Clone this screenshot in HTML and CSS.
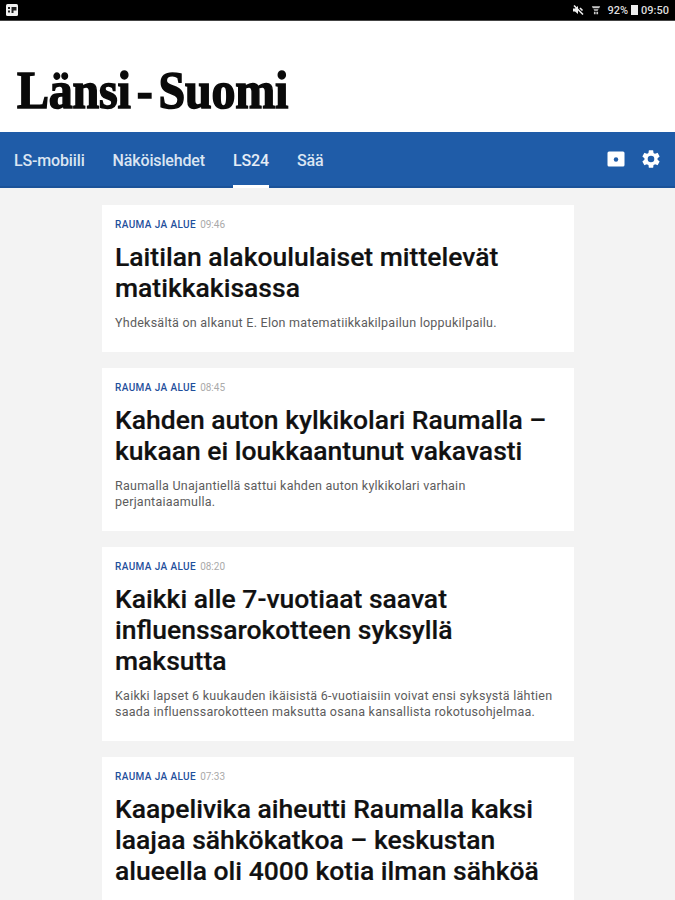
FILE: index.html
```html
<!DOCTYPE html>
<html lang="fi">
<head>
  <meta charset="UTF-8">
  <meta name="viewport" content="width=device-width, initial-scale=1.0">
  <title>Länsi-Suomi</title>
  <link rel="stylesheet" href="styles.css">
</head>
<body>
  <div class="statusbar">
    <svg class="status-pic" viewBox="0 0 12 12" width="12" height="12">
      <rect width="12" height="12" rx="1.5" fill="#f2f2f2"/>
      <rect x="2" y="3" width="2" height="2" fill="#222"/>
      <rect x="2" y="6.5" width="2" height="2" fill="#222"/>
      <path d="M5.5 3h5v3.5H7.5V9H5.5z" fill="#222"/>
    </svg>
    <div class="status-right">
      <svg viewBox="0 0 12 12" width="12" height="12">
        <path d="M1 4.500h2L6 2v8L3 7.500H1z" fill="#eee"/>
        <path d="M2 1.500l9 9" stroke="#eee" stroke-width="1.600"/>
        <path d="M8 4l2.500 2.500" stroke="#eee" stroke-width="1.600"/>
      </svg>
      <svg class="status-wifi" viewBox="0 0 12 12" width="10" height="12">
        <path d="M1 1.500h10L9.800 4H2.200zM3 5h6L8 7H4zM3.500 8h2v3h-2zM6.500 8h2v3h-2z" fill="#ccc"/>
      </svg>
      <span class="status-text">92%</span>
      <span class="battery"></span>
      <span class="status-text">09:50</span>
    </div>
  </div>

  <header class="masthead">
    <div class="logo">Länsi<span class="logo-dash">-</span>Suomi</div>
  </header>

  <nav class="navbar">
    <a class="nav-link">LS-mobiili</a>
    <a class="nav-link">Näköislehdet</a>
    <a class="nav-link active">LS24</a>
    <a class="nav-link">Sää</a>
    <div class="nav-icons">
      <svg viewBox="0 0 18 18" width="18" height="18">
        <path d="M2 1.500h14A1.500 1.500 0 0 1 17.500 3v12a1.500 1.500 0 0 1-1.500 1.500H2A1.500 1.500 0 0 1 .5 15V3A1.500 1.500 0 0 1 2 1.500z" fill="#fff"/>
        <circle cx="9" cy="9.500" r="2.200" fill="#1f5ca8"/>
      </svg>
      <svg viewBox="0 0 24 24" width="22" height="22">
        <path fill="#fff" d="M19.140 12.940c.04-.3.060-.61.060-.94s-.02-.64-.07-.94l2.030-1.580a.49.49 0 0 0 .12-.61l-1.920-3.320a.49.49 0 0 0-.59-.22l-2.390.96a7 7 0 0 0-1.620-.94l-.36-2.540a.48.48 0 0 0-.48-.41h-3.840a.48.48 0 0 0-.47.41l-.36 2.540c-.59.24-1.130.57-1.620.94l-2.390-.96a.48.48 0 0 0-.59.22L2.740 8.870a.48.48 0 0 0 .12.61l2.030 1.580c-.05.3-.09.63-.09.94s.02.64.07.94l-2.030 1.580a.49.49 0 0 0-.12.61l1.920 3.320c.12.22.37.29.59.22l2.390-.96c.5.380 1.030.7 1.620.94l.36 2.540c.05.24.24.41.48.41h3.840c.24 0 .44-.17.47-.41l.36-2.540c.59-.24 1.130-.56 1.620-.94l2.390.96c.22.08.47 0 .59-.22l1.920-3.320a.48.48 0 0 0-.12-.61zM12 15.600a3.600 3.600 0 1 1 0-7.200 3.600 3.600 0 0 1 0 7.200z"/>
      </svg>
    </div>
  </nav>

  <main class="feed">
    <article class="card">
      <div class="meta"><span class="section">RAUMA JA ALUE</span><span class="time">09:46</span></div>
      <h2>Laitilan alakoululaiset mittelevät matikkakisassa</h2>
      <p>Yhdeksältä on alkanut E. Elon matematiikkakilpailun loppukilpailu.</p>
    </article>
    <article class="card">
      <div class="meta"><span class="section">RAUMA JA ALUE</span><span class="time">08:45</span></div>
      <h2>Kahden auton kylkikolari Raumalla – kukaan ei loukkaantunut vakavasti</h2>
      <p>Raumalla Unajantiellä sattui kahden auton kylkikolari varhain perjantaiaamulla.</p>
    </article>
    <article class="card">
      <div class="meta"><span class="section">RAUMA JA ALUE</span><span class="time">08:20</span></div>
      <h2>Kaikki alle 7-vuotiaat saavat influenssarokotteen syksyllä maksutta</h2>
      <p>Kaikki lapset 6 kuukauden ikäisistä 6-vuotiaisiin voivat ensi syksystä lähtien saada influenssarokotteen maksutta osana kansallista rokotusohjelmaa.</p>
    </article>
    <article class="card">
      <div class="meta"><span class="section">RAUMA JA ALUE</span><span class="time">07:33</span></div>
      <h2>Kaapelivika aiheutti Raumalla kaksi laajaa sähkökatkoa – keskustan alueella oli 4000 kotia ilman sähköä</h2>
      <p>Sähkökatkot koskivat useita alueita.</p>
    </article>
  </main>
</body>
</html>
```

FILE: styles.css
```css
html, body { height: 900px; overflow: hidden; }
body { margin: 0; background: #f3f3f3; font-family: Roboto, "Liberation Sans", sans-serif; color: #111; }

.statusbar { height: 21px; background: #000; border-bottom: 1px solid #444; box-sizing: border-box; display: flex; align-items: center; justify-content: space-between; padding: 0 6px; }
.status-pic { display: block; }
.status-right { display: flex; align-items: center; gap: 3px; color: #ddd; }
.status-wifi { margin-left: 4px; margin-right: 3px; }
.status-text { font-size: 11px; font-weight: 500; }
.battery { width: 7px; height: 10px; background: #eee; }

.masthead { height: 111px; background: #fff; display: flex; align-items: flex-end; padding: 0 17px 12px; box-sizing: border-box; }
.logo { font-family: "Liberation Serif", serif; font-weight: 700; font-size: 48px; line-height: 56px; letter-spacing: -0.2px; color: #0a0a0a; -webkit-text-stroke: 1.4px #0a0a0a; transform: scaleY(1.1); transform-origin: left 44px; }
.logo-dash { margin: 0 6px; }

.navbar { height: 56px; background: #1f5ca8; display: flex; align-items: stretch; gap: 28px; padding: 0 14px; box-sizing: border-box; border-bottom: 2px solid #1a5299; }
.nav-link { display: flex; align-items: center; padding-top: 3px; font-size: 16px; font-weight: 500; color: #dbe5f2; letter-spacing: -0.15px; border-bottom: 3px solid transparent; margin-bottom: -2px; }
.nav-link.active { border-bottom-color: #fff; color: #e6edf6; }
.nav-icons { margin-left: auto; display: flex; align-items: center; gap: 15px; margin-right: -1px; }
.nav-icons svg { display: block; }

.feed { width: 472px; margin: 17px auto 0 102px; display: flex; flex-direction: column; gap: 16.5px; }
.card { background: #fff; padding: 13px 13px 20.5px; }
.meta { display: flex; align-items: center; gap: 4px; height: 12px; }
.section { font-size: 10px; font-weight: 500; color: #1f4f9c; letter-spacing: 0.4px; }
.time { font-size: 10px; color: #aaa; }
.card h2 { margin: 11px 0 0; font-size: 26.5px; line-height: 31px; font-weight: 500; color: #111; -webkit-text-stroke: 0.2px #111; }
.card p { margin: 12px 0 0; font-size: 12.5px; line-height: 16px; color: #5c5c5c; letter-spacing: 0.25px; }
```
